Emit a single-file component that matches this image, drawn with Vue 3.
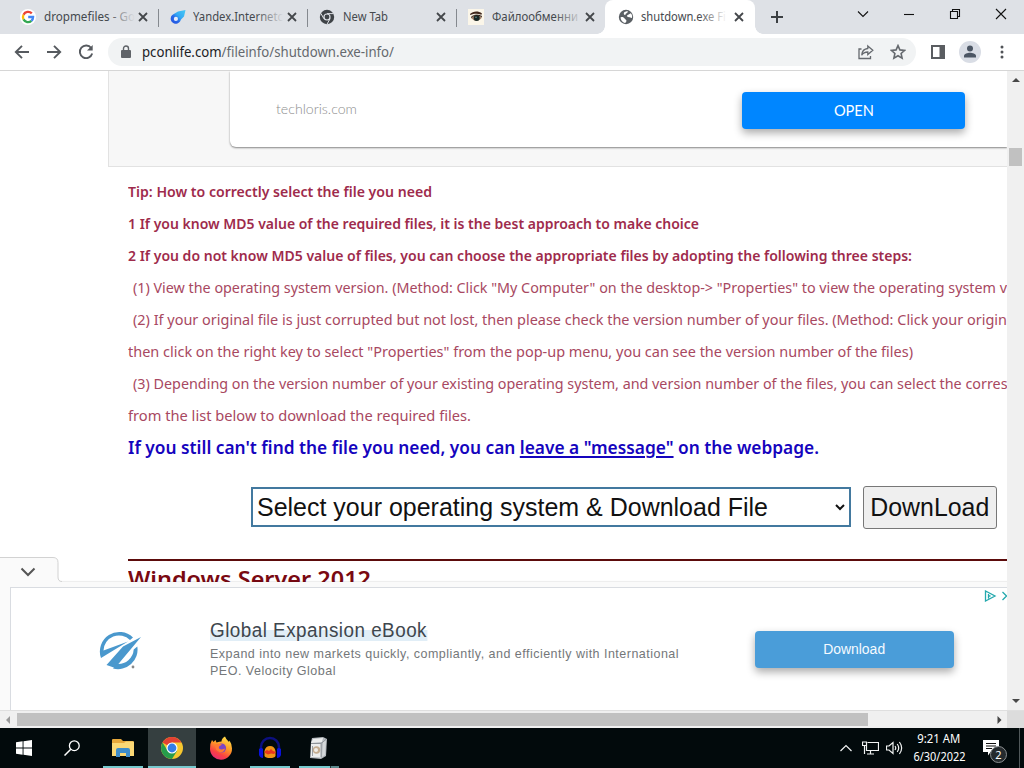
<script setup>
// Stretches a run of text horizontally to a given width in pixels.
const vFit = {
  mounted(el, { value }) {
    const natural = el.getBoundingClientRect().width
    if (natural) el.style.transform = `scaleX(${value / natural})`
  },
}

const tabs = [
  { icon: 'google', title: 'dropmefiles - Go', fit: 91, fade: true },
  { icon: 'yandex', title: 'Yandex.Internetc', fit: 90, fade: true },
  { icon: 'chrome', title: 'New Tab', fit: 45 },
  { icon: 'eye', title: 'Файлообменни', fit: 86, fade: true },
  { icon: 'globe', title: 'shutdown.exe Fi', fit: 85, fade: true, active: true },
]

const tips = [
  { text: 'Tip: How to correctly select the file you need', fit: 304, bold: true },
  { text: '1 If you know MD5 value of the required files, it is the best approach to make choice', fit: 571, bold: true },
  { text: '2 If you do not know MD5 value of files, you can choose the appropriate files by adopting the following three steps:', fit: 784, bold: true },
  { text: '(1) View the operating system version. (Method: Click "My Computer" on the desktop-> "Properties" to view the operating system v', fit: 874, indent: true },
  { text: '(2) If your original file is just corrupted but not lost, then please check the version number of your files. (Method: Click your origin', fit: 874, indent: true },
  { text: 'then click on the right key to select "Properties" from the pop-up menu, you can see the version number of the files)', fit: 785 },
  { text: '(3) Depending on the version number of your existing operating system, and version number of the files, you can select the corres', fit: 874.5, indent: true },
  { text: 'from the list below to download the required files.', fit: 343 },
]
</script>

<template>
  <div class="screen">
    <header class="tabstrip">
      <div v-for="(t, i) in tabs" :key="i" class="tab" :class="{ active: t.active, sep: i < 3 }">
        <svg v-if="t.icon === 'google'" class="fav" viewBox="0 0 16 16">
          <circle cx="8" cy="8" r="8" fill="#fff" />
          <g fill="none" stroke-width="2.3">
            <path d="M11.8 4.4A5.1 5.1 0 0 0 3.5 5.7" stroke="#ea4335" />
            <path d="M3.5 5.7a5.1 5.1 0 0 0 0 4.7" stroke="#fbbc05" />
            <path d="M3.5 10.4a5.1 5.1 0 0 0 7.9 1.4" stroke="#34a853" />
            <path d="M11.4 11.8A5 5 0 0 0 13.1 8H8.2" stroke="#4285f4" />
          </g>
        </svg>
        <svg v-else-if="t.icon === 'yandex'" class="fav" viewBox="0 0 16 16">
          <defs><linearGradient id="ya" x1="1" y1="0" x2="0" y2="1"><stop offset="0" stop-color="#43c9f5" /><stop offset=".45" stop-color="#35a9f3" /><stop offset=".65" stop-color="#2768e8" /><stop offset="1" stop-color="#2450df" /></linearGradient></defs>
          <path d="M15.5 1 L14 7.5 10.8 10.8A5.1 5.1 0 1 1 3.8 5L8 2.6z" fill="url(#ya)" />
          <circle cx="5.9" cy="9.9" r="2.1" fill="#e8eefb" />
        </svg>
        <svg v-else-if="t.icon === 'chrome'" class="fav" viewBox="0 0 16 16">
          <circle cx="8" cy="8" r="7.2" fill="#3f4347" />
          <circle cx="8" cy="8" r="3.6" fill="#dee1e6" /><circle cx="8" cy="8" r="2.4" fill="#3f4347" />
          <path d="M8 4.6h6.4M4.9 9.7 1.8 4.3M11.1 9.7 8 15.2" stroke="#dee1e6" stroke-width="1" />
        </svg>
        <svg v-else-if="t.icon === 'eye'" class="fav" viewBox="0 0 16 16">
          <path d="M0 0h16v16H0z" fill="#fbf6e9" />
          <path d="M2 5c3-3 8-3.600 12-.6l-.6 1.300C9 4 6 4.500 2.300 6z" fill="#40271b" />
          <path d="M3 9c2-3 8-3 11-1-1 4-8 5-9.500 2z" fill="#a1826b" />
          <circle cx="8.700" cy="8.900" r="3" fill="#172726" /><circle cx="8" cy="8.200" r=".7" fill="#7ba6a6" />
          <path d="M3 8.500c3-3 7-3 11-1" stroke="#281811" fill="none" />
        </svg>
        <svg v-else class="fav" viewBox="0 0 16 16">
          <circle cx="8" cy="8" r="7.200" fill="#5b6065" />
          <path d="M3 8.200c1.500-.4 3 .2 3.800 1.500.5 1 1.900.7 1.600 2.300-.2 1-.7 1.700-1.500 1.900C4.500 13.300 2.600 11 2.500 8.500zM6.500 3l3-.9c.6 1.200-.1 2-1.300 2.300-.8.3-.3 1.500-1.400 1.600C5.500 5.800 5.500 4 6.500 3zM9 6.500l2-1.300 1.800-1c1.200 1.400 1.600 3 1.200 4.600-1.300.4-1.900-.8-3-.6C9.900 8.200 8.800 7.600 9 6.500z" fill="#fff" />
        </svg>
        <span class="title"><span v-fit="t.fit" class="fit">{{ t.title }}</span><i v-if="t.fade" class="fade"></i></span>
        <svg class="x" viewBox="0 0 10 10"><path d="M1 1l8 8M9 1L1 9" /></svg>
      </div>
      <svg class="plus" viewBox="0 0 14 14"><path d="M7 1v12M1 7h12" /></svg>
      <div class="winbtns">
        <svg viewBox="0 0 12 12"><path d="M1 3.500l5 5 5-5" /></svg>
        <svg viewBox="0 0 12 12"><path d="M1 6.500h10" /></svg>
        <svg viewBox="0 0 12 12"><path d="M1.500 3.500h7v7h-7zM3.500 3.500v-2h7v7h-2" /></svg>
        <svg viewBox="0 0 12 12"><path d="M1 1l10 10M11 1L1 11" /></svg>
      </div>
    </header>

    <div class="toolbar">
      <svg class="nav" viewBox="0 0 16 16"><path d="M15 8H2M8 1.800L1.800 8 8 14.200" /></svg>
      <svg class="nav" viewBox="0 0 16 16"><path d="M1 8h13M8 1.800L14.200 8 8 14.200" /></svg>
      <svg class="nav" viewBox="0 0 16 16"><path d="M13.200 4A6.300 6.300 0 1 0 14.200 9.500" /><path d="M14.700 1v5.600H9z" class="solid" /></svg>
      <div class="omni">
        <svg class="lock" viewBox="0 0 10 13"><path d="M1 5h8q1 0 1 1v6q0 1-1 1H1q-1 0-1-1V6q0-1 1-1z" fill="#5f6368" /><path d="M2.500 5.500v-2a2.500 2.500 0 0 1 5 0v2" fill="none" stroke="#5f6368" stroke-width="1.400" /></svg>
        <span class="url"><span v-fit="252" class="fit"><b>pconlife.com</b>/fileinfo/shutdown.exe-info/</span></span>
        <svg class="share" viewBox="0 0 16 16"><path d="M3.500 5H1v9.500h11.500V12" /><path d="M9.800 2l5 4.300-5 4.200V8C7 8 5 9 3.700 11.200 4 7.500 6 4.800 9.800 4.500z" /></svg>
        <svg class="star" viewBox="0 0 16 16"><path d="M8 1.600l1.900 4.300 4.700.5-3.500 3.100 1 4.600L8 11.700l-4.100 2.400 1-4.600L1.400 6.400l4.700-.5z" /></svg>
      </div>
      <svg class="panel" viewBox="0 0 14 14"><path d="M1 1h12v12H1z" fill="none" stroke="#5a5d61" stroke-width="2" /><path d="M8.500 1H13v12H8.500z" fill="#5a5d61" /></svg>
      <svg class="avatar" viewBox="0 0 22 22"><circle cx="11" cy="11" r="11" fill="#d9dde5" /><circle cx="11" cy="7.500" r="3" fill="#4c5664" /><path d="M5 16.500v-1.800c0-2 3.700-3 6-3s6 1 6 3v1.800z" fill="#4c5664" /></svg>
      <svg class="dots" viewBox="0 0 4 14"><circle cx="2" cy="2" r="1.500" /><circle cx="2" cy="7" r="1.500" /><circle cx="2" cy="12" r="1.500" /></svg>
    </div>

    <div class="view">
      <main class="page">
        <section class="topad">
          <div class="card">
            <span class="domain"><span v-fit="81" class="fit">techloris.com</span></span>
            <span class="open"><span v-fit="40" class="fit mid">OPEN</span></span>
          </div>
        </section>
        <article class="body">
          <p v-for="(l, i) in tips" :key="i" class="line" :class="{ bold: l.bold, indent: l.indent }">
            <span v-fit="l.fit" class="fit">{{ l.text }}</span>
          </p>
          <p class="line blue"><span v-fit="691" class="fit">If you still can't find the file you need, you can <u>leave a "message"</u> on the webpage.</span></p>
          <div class="chooser">
            <div class="select">
              <span v-fit="511" class="fit">Select your operating system &amp; Download File</span>
              <svg viewBox="0 0 10 7"><path d="M1 1l4 4 4-4" /></svg>
            </div>
            <div class="dl"><span v-fit="119" class="fit mid">DownLoad</span></div>
          </div>
          <h2><span v-fit="243" class="fit">Windows Server 2012</span></h2>
        </article>

        <aside class="anchor">
          <svg class="handle" viewBox="0 0 62 31"><path d="M0 .5H53q5 0 5 5V20q0 5 4 5V29H0z" fill="#fafafa" /><path d="M0 .5H53q5 0 5 5V20q0 4.500 4 4.500" fill="none" stroke="#d2d2d2" /><path d="M21.500 11.500l6.500 6.500 6.500-6.500" fill="none" stroke="#555" stroke-width="2" /></svg>
          <div class="strip">
            <div class="ad">
              <svg class="vg" viewBox="0 0 44 44">
                <g fill="#4a98cd">
                  <path d="M35 9.500A19.500 19.500 0 0 0 3 30L30 13.500 5.500 22.500A15.500 15.500 0 0 1 32 12z" />
                  <path d="M43 9L25 18.500 8.500 37q4.500 1.500 8.500 3z" />
                  <path d="M39.300 18.500A19.500 19.500 0 0 1 15 40.500L19 35.900A15.500 15.500 0 0 0 35.700 21.500z" />
                </g>
                <circle cx="35" cy="39" r="1.400" fill="#888" />
              </svg>
              <div class="copy">
                <div class="head"><span v-fit="217" class="fit">Global Expansion eBook</span></div>
                <div class="sub"><span v-fit="469" class="fit">Expand into new markets quickly, compliantly, and efficiently with International</span></div>
                <div class="sub"><span v-fit="126" class="fit">PEO. Velocity Global</span></div>
              </div>
              <span class="get"><span v-fit="62" class="fit mid">Download</span></span>
              <svg class="choices" viewBox="0 0 25 12"><path d="M1.500 1v10l9.500-5zM4.500 4v4.500M4.500 6h2" /><path d="M18.500 2l4 4-4 4" /></svg>
            </div>
          </div>
        </aside>
      </main>
      <div class="vbar">
        <svg viewBox="0 0 8 4"><path d="M0 4h8L4 0z" /></svg>
        <i></i>
        <svg class="down" viewBox="0 0 8 4"><path d="M0 0h8L4 4z" /></svg>
      </div>
    </div>
    <div class="hbar">
      <svg viewBox="0 0 4 8"><path d="M4 0v8L0 4z" fill="#999" /></svg>
      <i></i>
      <svg class="right" viewBox="0 0 4 8"><path d="M0 0v8l4-4z" fill="#444" /></svg>
      <b></b>
    </div>

    <footer class="taskbar">
      <div class="task"><svg width="16" height="16" viewBox="0 0 16 16"><path d="M0 2.200l6.600-.9v6.200H0zM7.500 1.200L16 0v7.500H7.500zM0 8.400h6.600v6.300L0 13.800zM7.500 8.400H16V16l-8.500-1.200z" fill="#fff" /></svg></div>
      <div class="task search"><svg width="16" height="16" viewBox="0 0 16 16"><circle cx="10.300" cy="5.700" r="4.900" fill="none" stroke="#fff" stroke-width="1.300" /><path d="M6.800 9.200L.5 15.500" stroke="#fff" stroke-width="1.500" /></svg></div>
      <div class="task open1"><svg width="22" height="20" viewBox="0 0 22 20"><path d="M1 1h8l2 2h9.500q1 0 1 1v14H0V2q0-1 1-1z" fill="#e7a83b" /><path d="M0 5h12l2-1.500h8V18H0z" fill="#fbd875" /><path d="M4 19v-7q0-2 2-2h10q2 0 2 2v7h-4v-4H8v4z" fill="#3f8dca" /></svg></div>
      <div class="task current"><svg width="24" height="24" viewBox="0 0 24 24"><circle cx="12" cy="12" r="11" fill="#f6c72f" /><path d="M12 12L2.500 6.500A11 11 0 0 1 21.500 6.500H12z" fill="#e34133" /><path d="M12 12L7.500 14.500 2.500 6.500A11 11 0 0 0 12 23l5-8z" fill="#269c4b" /><circle cx="12" cy="12" r="5.500" fill="#fff" /><circle cx="12" cy="12" r="4.400" fill="#347de7" /></svg></div>
      <div class="task"><svg width="24" height="24" viewBox="0 0 24 24">
        <defs><linearGradient id="ff" x1=".8" y1="0" x2=".3" y2="1"><stop offset="0" stop-color="#ffe84a" /><stop offset=".45" stop-color="#ff9527" /><stop offset=".75" stop-color="#fa4144" /><stop offset="1" stop-color="#e62b78" /></linearGradient></defs>
        <path d="M3 4l1.500 2L6.500 4l1 2.500q3-1 5-1Q12.500 2.500 16 .5q1 3 4 5.500l.5-1.500Q23 8 23 12.500A11 11 0 0 1 1 13Q.5 8 3 4z" fill="url(#ff)" />
        <circle cx="12.500" cy="12" r="4.600" fill="#7c45c5" /><path d="M6 8.500q4-1.500 7 0l-3 2q-1 3 3 3l3-1q-1 4-5 4-5-2-5-8z" fill="#ff7a33" />
      </svg></div>
      <div class="task open1"><svg width="24" height="24" viewBox="0 0 24 24"><path d="M3 17V11a9 9 0 0 1 18 0v6" fill="none" stroke="#0c1080" stroke-width="2.500" /><path d="M1 13q2.500-2 4 0v9q-3 0-4-3zM23 13q-2.500-2-4 0v9q3 0 4-3z" fill="#0a12dc" /><path d="M6.500 15q1-5 5.500-5t5.500 5v5q-1 2-5.500 2t-5.500-2z" fill="#f19416" /><path d="M6 16l3-2 2 1 2-2 2 2 3 1-2 2-3-.5-3 1-2-1z" fill="#e9361c" /></svg></div>
      <div class="task stacked"><svg width="22" height="24" viewBox="0 0 22 24"><path d="M4 2l11-1 4 2-1 17-5 3-11-1 1-16z" fill="#b4b9be" /><path d="M5 3l10-1-1 4-11 1zM3 8l10-.5v14L3 21z" fill="#eceeee" /><path d="M15 5l3-1-1 15-3 2z" fill="#d4d8da" /><circle cx="8.500" cy="14" r="3.700" fill="#c4ad91" /><circle cx="8" cy="14" r="2" fill="#f0eee9" /><path d="M3 7.500h10l5-4M13 8v13M4.500 10v10" fill="none" stroke="#777d82" stroke-width=".7" /></svg></div>
      <div class="tray">
        <svg width="12" height="8" viewBox="0 0 12 8"><path d="M.5 7L6 1.500 11.500 7" /></svg>
        <svg class="net" width="17" height="14" viewBox="0 0 17 14"><path d="M5.500 1.500h11v8h-12V5M8.500 9.500v3M5 13h7M.5 1h4v3.500h-4zM2.500 5v8" /></svg>
        <svg class="vol" width="17" height="14" viewBox="0 0 17 14"><path d="M.5 5v4h2.500l4 3.500v-11L3 5zM9 5q1.500 2 0 4M11.200 3q3 4 0 8M13.400 1q4.500 6 0 12" /></svg>
        <div class="clock"><span><span v-fit="43" class="fit mid">9:21 AM</span></span><span><span v-fit="52" class="fit mid">6/30/2022</span></span></div>
        <div class="note"><svg width="16" height="16" viewBox="0 0 16 16"><path d="M0 0h16v12H7.500L5 15.500V12H0z" fill="#fff" /><path d="M3 3.500h10M3 6h10M3 8.500h6" stroke="#111" /></svg><em>2</em></div>
        <i class="edge"></i>
      </div>
    </footer>
  </div>
</template>

<style>
body { margin: 0; overflow: hidden; }
</style>

<style scoped>
* { box-sizing: border-box; }
.screen { width: 1024px; height: 768px; overflow: hidden; display: flex; flex-direction: column; background: #fff; font-family: "Noto Sans", sans-serif; }
.fit { display: inline-block; white-space: pre; transform-origin: left center; flex: none; }
.mid { transform-origin: center; }
svg { display: block; flex: none; }

.tabstrip { height: 34px; background: #dee1e6; display: flex; flex: none; }
.tab { width: 149px; height: 34px; padding-left: 20px; display: flex; align-items: center; position: relative; flex: none; }
.tab:first-child { width: 159px; }
.tab.active { width: 150px; background: #fff; border-radius: 8px 8px 0 0; margin-left: -1px; padding-left: 13px; }
.tab:nth-child(n+2):not(.active) { padding-left: 11px; }
.tab.sep::after { content: ""; position: absolute; right: 0; top: 9px; width: 1px; height: 18px; background: #85898f; }
.tab.active::before, .tab.active::after { content: ""; position: absolute; bottom: 0; width: 8px; height: 8px; }
.tab.active::before { left: -8px; background: radial-gradient(circle at 0 0, #dee1e6 7.500px, #fff 8px); }
.tab.active::after { right: -8px; background: radial-gradient(circle at 100% 0, #dee1e6 7.500px, #fff 8px); }
.fav { width: 16px; height: 16px; }
.title { position: relative; width: 91px; height: 20px; margin-left: 8px; line-height: 19px; font-size: 12px; color: #45494e; overflow: hidden; flex: none; }
.tab:nth-child(2) .title { margin-left: 7px; }
.active .title { width: 86px; margin-left: 7px; }
.fade { position: absolute; right: 0; top: 0; width: 28px; height: 20px; background: linear-gradient(90deg, #dee1e600, #dee1e6); }
.active .fade { background: linear-gradient(90deg, #fff0, #fff); }
.x { position: absolute; right: 11px; top: 12px; width: 10px; height: 10px; }
.x path { stroke: #44474b; stroke-width: 1.800; }
.plus { width: 14px; height: 14px; margin: 10px 0 0 15px; }
.plus path { stroke: #3c4043; stroke-width: 2; }
.winbtns { display: flex; gap: 34px; margin: 8px 0 0 73px; }
.winbtns svg { width: 12px; height: 12px; }
.winbtns path { fill: none; stroke: #111; stroke-width: 1.100; }

.toolbar { height: 37px; border-bottom: 1px solid #d6d6d6; display: flex; align-items: center; padding-left: 14px; flex: none; }
.nav { width: 16px; height: 16px; margin-right: 16px; }
.nav path { fill: none; stroke: #565a5f; stroke-width: 1.900; }
.nav .solid { fill: #565a5f; stroke: none; }
.omni { width: 808px; height: 28px; border-radius: 14px; background: #f1f3f4; display: flex; align-items: center; padding-left: 13px; margin-left: -2px; }
.lock { width: 10px; height: 13px; margin-right: 11px; margin-top: -2px; }
.url { width: 700px; font-size: 14px; line-height: 20px; color: #65696e; margin-top: -1px; }
.url b { font-weight: 400; color: #202124; }
.share { width: 16px; height: 16px; margin-left: 16px; }
.star { width: 16px; height: 16px; margin-left: 16px; }
.share path, .star path { fill: none; stroke: #65696e; stroke-width: 1.300; }
.star path { stroke-width: 1.600; }
.panel { width: 14px; height: 14px; margin-left: 15px; }
.avatar { width: 22px; height: 22px; margin-left: 14px; }
.dots { width: 4px; height: 14px; margin-left: 19px; fill: #505357; }

.view { height: 639px; display: flex; flex: none; }
.page { position: relative; width: 1007px; height: 639px; overflow: hidden; }
.topad { height: 96px; margin-left: 108px; background: #f7f7f7; border-left: 1px solid #e2e2e2; border-bottom: 1px solid #e2e2e2; padding-left: 121px; }
.card { height: 76px; background: #fff; border-bottom-left-radius: 6px; box-shadow: 0 1px 2px #0007; display: flex; align-items: center; padding-left: 46px; }
.domain { width: 466px; font: 300 14px/20px Lato, sans-serif; color: #8e8e8e; }
.open { width: 223px; height: 37px; margin-top: 3px; border-radius: 4px; background: #0086ff; color: #fff; font: 400 16px/35px Lato, sans-serif; display: flex; justify-content: center; box-shadow: 0 4px 8px #0005; }
.body { padding: 8px 0 0 128px; }
.line { margin: 0; height: 32px; line-height: 32px; font-size: 15px; color: #a84861; white-space: nowrap; }
.bold { font-weight: 600; color: #9e2b4c; }
.indent { padding-left: 5px; }
.blue { font-size: 18.500px; line-height: 31px; font-weight: 600; color: #1504be; }
.blue u { text-decoration-thickness: 2px; text-underline-offset: 2px; }
.chooser { display: flex; margin: 23px 0 0 123px; gap: 12px; align-items: flex-start; font-family: "Liberation Sans", sans-serif; font-size: 25px; color: #111; }
.select { width: 600px; height: 40px; margin-top: 1px; border: 2px solid #43799f; padding: 0 4px; display: flex; align-items: center; justify-content: space-between; }
.select svg { width: 10px; height: 7px; }
.select path { fill: none; stroke: #111; stroke-width: 2; }
.dl { width: 134px; height: 43px; border: 1px solid #777; border-radius: 3px; background: #efefef; display: flex; align-items: center; justify-content: center; }
h2 { margin: 30px 0 0; border-top: 2px solid #5c0b0b; font-size: 22px; line-height: 35px; font-weight: 600; color: #7a0912; }

.anchor { position: absolute; left: 0; top: 486px; width: 1007px; height: 153px; }
.handle { position: absolute; left: 0; top: 0; width: 62px; height: 31px; z-index: 1; }
.strip { margin-top: 25px; height: 128px; background: #fafafa; padding: 5px 0 0 10px; box-shadow: 0 -1px 1px #0001; }
.ad { position: relative; height: 123px; background: #fff; border: 1px solid #d9dce1; border-right: 0; border-bottom: 0; display: flex; align-items: flex-start; padding-left: 87px; }
.vg { width: 44px; height: 44px; margin-top: 40px; }
.copy { width: 545px; margin: 31px 0 0 68px; font-family: "Liberation Sans", sans-serif; }
.head { height: 24px; margin-bottom: 2px; font-size: 19.500px; line-height: 22px; color: #3e464d; }
.head .fit { background: linear-gradient(transparent 50%, #e1eef7 50%); letter-spacing: .5px; }
.sub { height: 17px; line-height: 17px; font-size: 13px; color: #74777a; }
.sub .fit { letter-spacing: .5px; }
.get { width: 199px; height: 37px; margin-top: 43px; border-radius: 4px; background: #4a9dd9; color: #f4faff; font: 14px/37px "Liberation Sans", sans-serif; display: flex; justify-content: center; box-shadow: 0 4px 8px #0005; }
.choices { position: absolute; right: -2px; top: 2px; width: 25px; height: 12px; }
.choices path { fill: none; stroke: #25a9ae; stroke-width: 1.300; }

.vbar { width: 17px; background: #f0f0f0; display: flex; flex-direction: column; align-items: center; padding: 7px 0; }
.vbar svg { width: 8px; height: 4px; fill: #484848; }
.vbar i { width: 13px; height: 18px; margin-top: 66px; background: #c1c1c1; }
.vbar .down { margin-top: auto; }
.hbar { height: 18px; background: #f0f0f0; border-top: 1px solid #dfdfdf; display: flex; align-items: center; padding-left: 6px; flex: none; }
.hbar svg { width: 4px; height: 8px; }
.hbar i { width: 851px; height: 13px; margin-left: 7px; background: #c1c1c1; }
.hbar .right { margin-left: 129px; width: 5px; }
.hbar b { width: 17px; height: 17px; margin-left: auto; background: #dcdcdc; }

.taskbar { height: 40px; background: #020a0c; display: flex; flex: none; }
.task { position: relative; width: 49px; height: 40px; display: flex; align-items: center; justify-content: center; }
.task:first-child { width: 48px; }
.task.search { padding-right: 2px; }
.task:nth-child(3) { width: 51px; }
.current { width: 48px; background: #353f40; }
.open1::after, .current::after, .stacked::after { content: ""; position: absolute; bottom: 0; left: 5px; width: 40px; height: 2px; background: #76c9ce; }
.task:nth-child(3)::after { left: 6px; }
.current::after { left: 0; width: 48px; }
.stacked::after { background: linear-gradient(90deg, #76c9ce 31px, #263b3d 31px 32px, #5b898d 32px); }
.tray { margin-left: auto; display: flex; align-items: center; }
.tray path { stroke-width: 1.200; }
.tray > svg path { fill: none; stroke: #f1f3f3; }
.net { margin-left: 10px; }
.vol { margin-left: 7px; }
.clock { width: 72px; font-size: 12px; line-height: 18px; color: #fff; padding-bottom: 1px; }
.clock > span { display: flex; justify-content: center; }
.note { position: relative; width: 24px; height: 16px; margin-left: 8px; }
.note em { position: absolute; left: 7px; top: 6px; width: 17px; height: 17px; border: 1px solid #8b8f91; border-radius: 50%; background: #252b2e; color: #fff; font: normal 11px/15px "Noto Sans", sans-serif; text-align: center; }
.edge { width: 1px; height: 40px; margin: 0 4px 0 12px; background: #50585a; }
</style>
